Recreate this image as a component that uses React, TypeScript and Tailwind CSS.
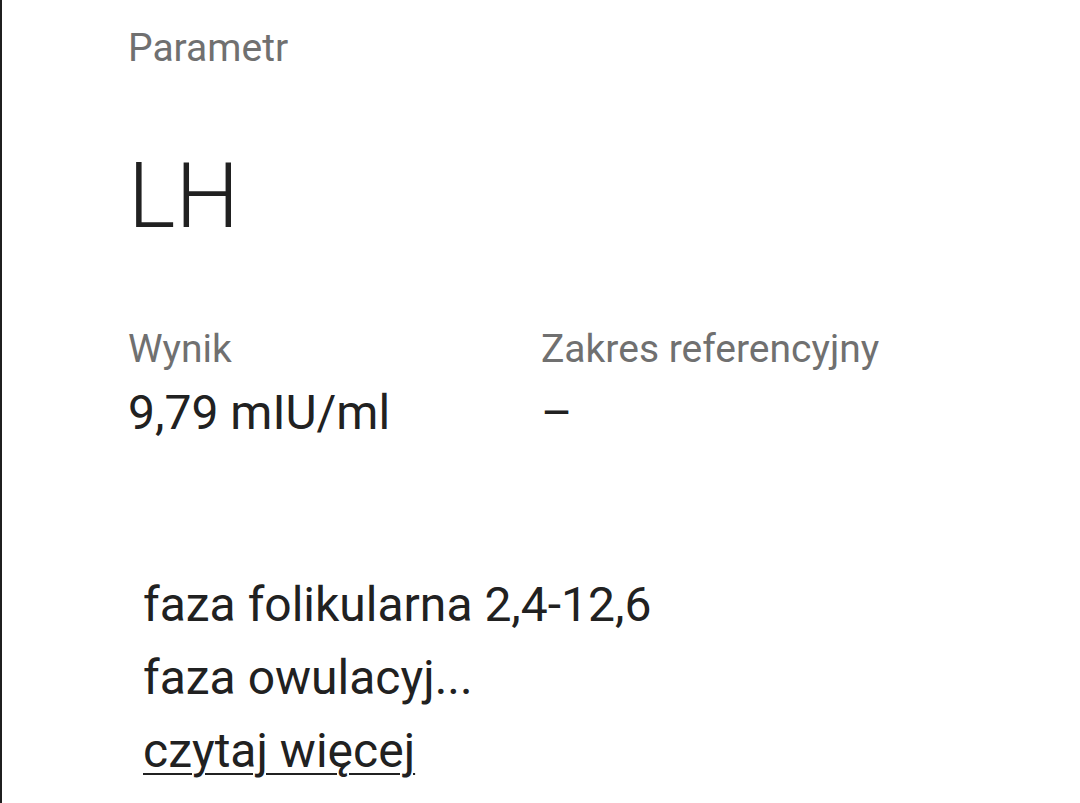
export default function App() {
  return (
    <div className="min-h-[803px] w-[1080px] bg-white border-l-2 border-[#1f1f1f] font-['Roboto',sans-serif]">
      <div className="pl-[126px] pt-[24px]">
        <div className="text-[39px] leading-[48px] text-[#707070]">Parametr</div>
        <div className="mt-[80px] text-[90px] leading-[90px] font-light text-[#212121]">LH</div>

        <div className="mt-[83px] flex">
          <div className="w-[413px]">
            <div className="text-[39px] leading-[48px] text-[#707070]">Wynik</div>
            <div className="mt-[12px] text-[48px] leading-[56px] text-[#212121]">9,79 mIU/ml</div>
          </div>
          <div>
            <div className="text-[39px] leading-[48px] text-[#707070]">Zakres referencyjny</div>
            <div className="mt-[12px] text-[48px] leading-[56px] text-[#212121]">–</div>
          </div>
        </div>

        <div className="mt-[127px] pl-[15px] text-[48px] leading-[73px] text-[#212121]">
          <div>faza folikularna 2,4-12,6</div>
          <div>faza owulacyj...</div>
          <a href="#" className="underline decoration-2 underline-offset-[6px]">czytaj więcej</a>
        </div>
      </div>
    </div>
  )
}
